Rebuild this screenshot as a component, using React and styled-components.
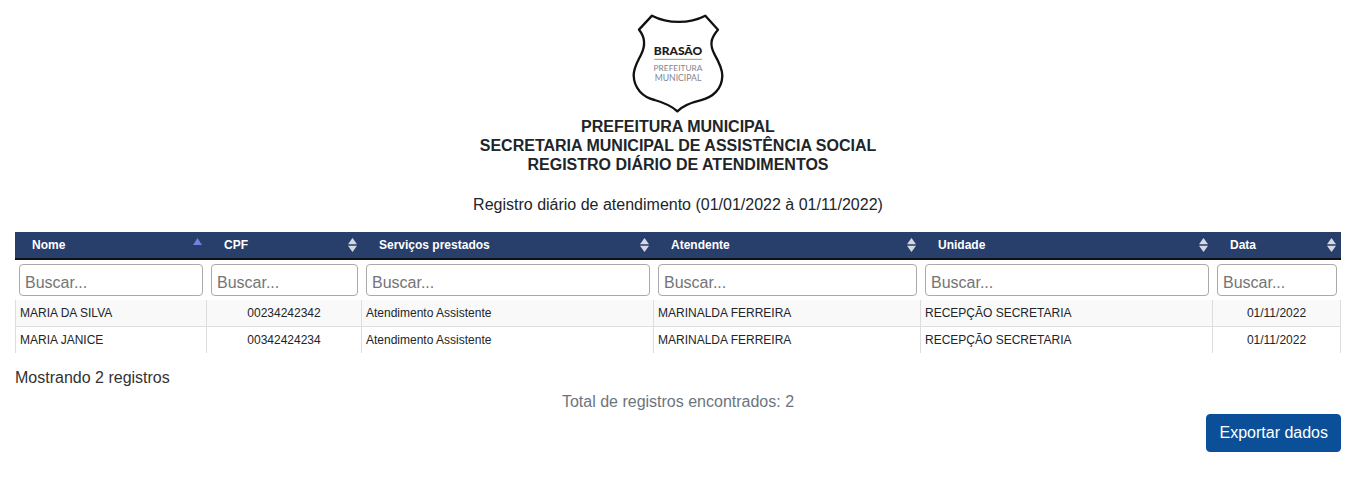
import React, { useState } from 'react';
import styled, { createGlobalStyle } from 'styled-components';

const GlobalStyle = createGlobalStyle`
  *, *::before, *::after { box-sizing: border-box; }
  body {
    margin: 0;
    background: #fff;
    color: #212529;
    font-family: "Liberation Sans", Arial, sans-serif;
    font-size: 16px;
    line-height: 24px;
  }
`;

const Page = styled.main`
  padding: 14px 14px 32px 15px;
`;

const Letterhead = styled.header`
  display: flex;
  flex-direction: column;
  align-items: center;
  text-align: center;
`;

const Crest = styled.svg`
  display: block;
  width: 92px;
  height: 99px;
  margin-bottom: 4px;
`;

const Title = styled.h1`
  margin: 0;
  font-size: 16px;
  line-height: 19px;
  font-weight: 700;
`;

const TitleLine = styled.span`
  display: block;
`;

const Period = styled.p`
  margin: 19px 0 15px;
`;

const RecordsTable = styled.table`
  width: 100%;
  table-layout: fixed;
  border-collapse: separate;
  border-spacing: 0;
  font-size: 12px;
  line-height: 18px;
`;

const HeadCell = styled.th`
  padding: 0;
  background: #283e6b;
  border-bottom: 2px solid #111;
`;

const SortButton = styled.button`
  display: flex;
  align-items: center;
  justify-content: space-between;
  width: 100%;
  height: 26px;
  padding: 0 5px 0 17px;
  border: 0;
  background: transparent;
  color: #fff;
  font: inherit;
  font-weight: 700;
  cursor: pointer;
`;

const SortIcon = styled.svg`
  width: 9px;
  height: 14px;
`;

const FilterCell = styled.td`
  padding: 4px;
`;

const FilterInput = styled.input`
  display: block;
  width: 100%;
  height: 32px;
  padding: 6px 5px 0;
  border: 1px solid #aaa;
  border-radius: 4px;
  background: #fff;
  color: #212529;
  font: inherit;
  font-size: 16px;
  &::placeholder { color: #757575; opacity: 1; }
`;

const Cell = styled.td`
  height: 27px;
  padding: 0 4px;
  border-right: 1px solid #ddd;
  text-align: ${({ $align }) => $align || 'left'};
  &:first-child { border-left: 1px solid #ddd; }
`;

const Row = styled.tr`
  &:nth-child(odd) { background: #f9f9f9; }
  &:not(:last-child) ${Cell} { border-bottom: 1px solid #ddd; }
  &:last-child ${Cell} { height: 26px; }
`;

const Showing = styled.p`
  margin: 13px 0 0;
  color: #333;
`;

const Total = styled.p`
  margin: 0;
  text-align: center;
  color: #6c757d;
`;

const Actions = styled.div`
  display: flex;
  justify-content: flex-end;
`;

const ExportButton = styled.button`
  padding: 6px 12px;
  border: 1px solid #0b4f98;
  border-radius: 4px;
  background: #0b4f98;
  color: #fff;
  font: inherit;
  cursor: pointer;
`;

const columns = [
  { key: 'nome', label: 'Nome', width: 192 },
  { key: 'cpf', label: 'CPF', width: 155, align: 'center' },
  { key: 'servico', label: 'Serviços prestados', width: 292 },
  { key: 'atendente', label: 'Atendente', width: 267 },
  { key: 'unidade', label: 'Unidade', width: 292 },
  { key: 'data', label: 'Data', width: 128, align: 'center' },
];

const records = [
  {
    nome: 'MARIA DA SILVA',
    cpf: '00234242342',
    servico: 'Atendimento Assistente',
    atendente: 'MARINALDA FERREIRA',
    unidade: 'RECEPÇÃO SECRETARIA',
    data: '01/11/2022',
  },
  {
    nome: 'MARIA JANICE',
    cpf: '00342424234',
    servico: 'Atendimento Assistente',
    atendente: 'MARINALDA FERREIRA',
    unidade: 'RECEPÇÃO SECRETARIA',
    data: '01/11/2022',
  },
];

function Arrows({ direction }) {
  if (direction) {
    return (
      <SortIcon viewBox="0 0 9 14" aria-hidden="true">
        <path d={direction === 'asc' ? 'M4.5 0L9 7H0Z' : 'M4.5 14L0 7H9Z'} fill="#7480dc" />
      </SortIcon>
    );
  }
  return (
    <SortIcon viewBox="0 0 9 14" aria-hidden="true">
      <path d="M4.5 0L9 6.3H0Z" fill="#d3d9e3" />
      <path d="M4.5 14L0 7.7H9Z" fill="#d3d9e3" />
    </SortIcon>
  );
}

function Shield() {
  return (
    <Crest viewBox="36 27 276 297" role="img" aria-label="Brasão da Prefeitura Municipal">
      <path
        d="M96 32C144 57 208 57 256 32L294 74C272 99 268 119 284 149C296 170 307 190 307 212C306 252 279 277 241 286C211 293 190 301 172 319C153 301 132 293 104 285C68 276 42 250 41 211C41 188 52 171 63 149C77 121 77 98 57 74Z"
        fill="#fff"
        stroke="#111"
        strokeWidth="7"
        strokeLinejoin="round"
      />
      <g fontFamily="Lato, sans-serif" textAnchor="middle">
        <text x="174" y="151" fontSize="36" fontWeight="900" fill="#1b1b1b">BRASÃO</text>
        <text x="174" y="198" fontSize="25" fill="#85838a">PREFEITURA</text>
        <text x="174" y="228" fontSize="26" fill="#85838a">MUNICIPAL</text>
      </g>
      <path d="M103 163H246" stroke="#98969c" strokeWidth="3" />
    </Crest>
  );
}

export default function App() {
  const [filters, setFilters] = useState({});
  const [sort, setSort] = useState({ key: 'nome', direction: 'asc' });

  const toggleSort = (key) =>
    setSort((s) => ({
      key,
      direction: s.key === key && s.direction === 'asc' ? 'desc' : 'asc',
    }));

  const visible = records
    .filter((r) =>
      columns.every((c) => r[c.key].toLowerCase().includes((filters[c.key] || '').toLowerCase()))
    )
    .sort((a, b) => a[sort.key].localeCompare(b[sort.key]) * (sort.direction === 'asc' ? 1 : -1));

  return (
    <>
      <GlobalStyle />
      <Page>
        <Letterhead>
          <Shield />
          <Title>
            <TitleLine>PREFEITURA MUNICIPAL</TitleLine>
            <TitleLine>SECRETARIA MUNICIPAL DE ASSISTÊNCIA SOCIAL</TitleLine>
            <TitleLine>REGISTRO DIÁRIO DE ATENDIMENTOS</TitleLine>
          </Title>
          <Period>Registro diário de atendimento (01/01/2022 à 01/11/2022)</Period>
        </Letterhead>

        <RecordsTable>
          <colgroup>
            {columns.map((c) => (
              <col key={c.key} width={c.width} />
            ))}
          </colgroup>
          <thead>
            <tr>
              {columns.map((c) => (
                <HeadCell
                  key={c.key}
                  scope="col"
                  aria-sort={
                    sort.key !== c.key ? 'none' : sort.direction === 'asc' ? 'ascending' : 'descending'
                  }
                >
                  <SortButton type="button" onClick={() => toggleSort(c.key)}>
                    {c.label}
                    <Arrows direction={sort.key === c.key ? sort.direction : null} />
                  </SortButton>
                </HeadCell>
              ))}
            </tr>
            <tr>
              {columns.map((c) => (
                <FilterCell key={c.key}>
                  <FilterInput
                    type="text"
                    placeholder="Buscar..."
                    aria-label={`Buscar por ${c.label}`}
                    value={filters[c.key] || ''}
                    onChange={(e) => setFilters({ ...filters, [c.key]: e.target.value })}
                  />
                </FilterCell>
              ))}
            </tr>
          </thead>
          <tbody>
            {visible.map((r) => (
              <Row key={r.cpf}>
                {columns.map((c) => (
                  <Cell key={c.key} $align={c.align}>
                    {r[c.key]}
                  </Cell>
                ))}
              </Row>
            ))}
          </tbody>
        </RecordsTable>

        <Showing>Mostrando {visible.length} registros</Showing>
        <Total>Total de registros encontrados: {records.length}</Total>
        <Actions>
          <ExportButton type="button">Exportar dados</ExportButton>
        </Actions>
      </Page>
    </>
  );
}
